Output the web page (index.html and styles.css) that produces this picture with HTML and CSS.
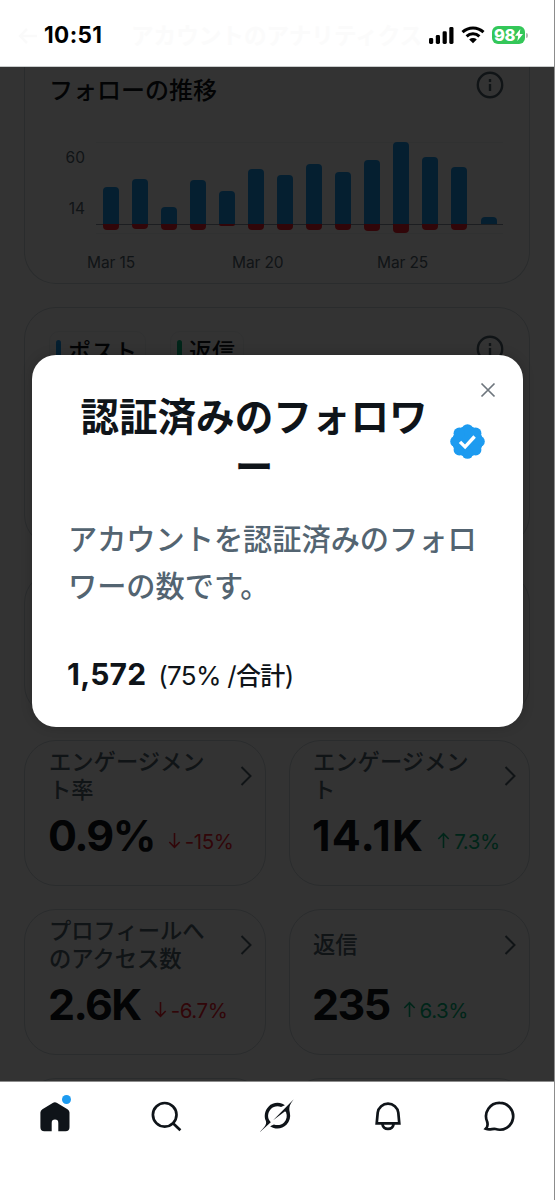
FILE: index.html
```html
<!DOCTYPE html>
<html lang="ja">
<head>
    <meta charset="UTF-8">
    <meta name="viewport" content="width=555, height=1200">
    <title>アカウントのアナリティクス</title>
    <link rel="stylesheet" href="styles.css">
</head>
<body>
    <div class="screen">
        <!-- Status bar over the faded page header -->
        <header class="status-bar">
            <div class="page-header">
                <svg width="20" height="18" viewBox="0 0 20 18"><path d="M19 9H2M9 2L2 9l7 7"/></svg>
                <span>アカウントのアナリティクス</span>
            </div>
            <span class="time">10:51</span>
            <div class="status-icons">
                <svg width="25" height="17" viewBox="0 0 25 17">
                    <rect x="0" y="11" width="4.2" height="6" rx="1.4"/>
                    <rect x="6.8" y="8" width="4.2" height="9" rx="1.4"/>
                    <rect x="13.6" y="4.3" width="4.2" height="12.7" rx="1.4"/>
                    <rect x="20.3" y="0" width="4.2" height="17" rx="1.4"/>
                </svg>
                <svg class="wifi" width="24" height="18" viewBox="0 0 24 18">
                    <path d="M1.5 6.2a15.2 15.2 0 0 1 21 0M5.6 10.3a9.3 9.3 0 0 1 12.8 0" fill="none" stroke="#000" stroke-width="3"/>
                    <path d="M8.2 13.4a5.6 5.6 0 0 1 7.6 0L12 17.2z"/>
                </svg>
                <div class="battery">
                    <span>98</span>
                    <svg width="8" height="12" viewBox="0 0 8 12"><path d="M5.3 0L0 6.7h3.2L2.4 12 8 5.1H4.7z" fill="#fff"/></svg>
                </div>
                <i class="battery-tip"></i>
            </div>
        </header>

        <main class="content">
            <!-- Follows over time -->
            <section class="card chart-card">
                <div class="card-head">
                    <h2>フォローの推移</h2>
                    <svg class="info" width="28" height="28" viewBox="0 0 28 28"><circle cx="14" cy="14" r="12.2"/><path d="M14 13v7M14 8v3"/></svg>
                </div>
                <div class="chart">
                    <div class="y-axis"><span>60</span><span>14</span></div>
                    <div class="plot">
                        <div class="bar"><i class="up" style="height:37px"></i><i class="down" style="height:6px"></i></div>
                        <div class="bar"><i class="up" style="height:45px"></i><i class="down" style="height:5px"></i></div>
                        <div class="bar"><i class="up" style="height:17px"></i><i class="down" style="height:6px"></i></div>
                        <div class="bar"><i class="up" style="height:44px"></i><i class="down" style="height:6px"></i></div>
                        <div class="bar"><i class="up" style="height:33px"></i><i class="down" style="height:2px"></i></div>
                        <div class="bar"><i class="up" style="height:55px"></i><i class="down" style="height:6px"></i></div>
                        <div class="bar"><i class="up" style="height:49px"></i><i class="down" style="height:6px"></i></div>
                        <div class="bar"><i class="up" style="height:60px"></i><i class="down" style="height:6px"></i></div>
                        <div class="bar"><i class="up" style="height:52px"></i><i class="down" style="height:6px"></i></div>
                        <div class="bar"><i class="up" style="height:64px"></i><i class="down" style="height:7px"></i></div>
                        <div class="bar"><i class="up" style="height:82px"></i><i class="down" style="height:9px"></i></div>
                        <div class="bar"><i class="up" style="height:67px"></i><i class="down" style="height:6px"></i></div>
                        <div class="bar"><i class="up" style="height:57px"></i><i class="down" style="height:6px"></i></div>
                        <div class="bar"><i class="up" style="height:7px"></i></div>
                    </div>
                </div>
                <div class="x-axis"><span>Mar 15</span><span>Mar 20</span><span>Mar 25</span></div>
            </section>

            <!-- Posts and replies -->
            <section class="card posts-card">
                <div class="card-head">
                    <div class="legend">
                        <span class="chip"><i class="blue"></i>ポスト</span>
                        <span class="chip"><i class="green"></i>返信</span>
                    </div>
                    <svg class="info" width="28" height="28" viewBox="0 0 28 28"><circle cx="14" cy="14" r="12.2"/><path d="M14 13v7M14 8v3"/></svg>
                </div>
            </section>

            <!-- Metric tiles -->
            <div class="metrics">
                <section class="card metric"></section>
                <section class="card metric"></section>
                <section class="card metric">
                    <div class="metric-head"><h3>エンゲージメント率</h3><svg width="12" height="20" viewBox="0 0 12 20"><path d="M1.5 1l9 9-9 9"/></svg></div>
                    <div class="metric-value"><b>0.9%</b><span class="delta loss"><svg width="13" height="17" viewBox="0 0 12 17"><path d="M6 1v14M.8 10L6 15.3 11.2 10"/></svg>-15%</span></div>
                </section>
                <section class="card metric">
                    <div class="metric-head"><h3>エンゲージメント</h3><svg width="12" height="20" viewBox="0 0 12 20"><path d="M1.5 1l9 9-9 9"/></svg></div>
                    <div class="metric-value"><b class="wide">14.1K</b><span class="delta gain"><svg width="13" height="17" viewBox="0 0 12 17"><path d="M6 16V2M.8 7L6 1.7 11.2 7"/></svg>7.3%</span></div>
                </section>
                <section class="card metric">
                    <div class="metric-head"><h3>プロフィールへのアクセス数</h3><svg width="12" height="20" viewBox="0 0 12 20"><path d="M1.5 1l9 9-9 9"/></svg></div>
                    <div class="metric-value"><b>2.6K</b><span class="delta loss"><svg width="13" height="17" viewBox="0 0 12 17"><path d="M6 1v14M.8 10L6 15.3 11.2 10"/></svg>-6.7%</span></div>
                </section>
                <section class="card metric">
                    <div class="metric-head"><h3>返信</h3><svg width="12" height="20" viewBox="0 0 12 20"><path d="M1.5 1l9 9-9 9"/></svg></div>
                    <div class="metric-value"><b>235</b><span class="delta gain"><svg width="13" height="17" viewBox="0 0 12 17"><path d="M6 16V2M.8 7L6 1.7 11.2 7"/></svg>6.3%</span></div>
                </section>
                <section class="card metric"></section>
                <section class="card metric"></section>
            </div>

            <!-- Dimmed backdrop with the dialog -->
            <div class="overlay">
                <div class="modal">
                    <button class="close" aria-label="閉じる"><svg width="16" height="16" viewBox="0 0 16 16"><path d="M1.5 1.5l13 13M14.5 1.5l-13 13"/></svg></button>
                    <div class="modal-title">
                        <h1>認証済みのフォロワー</h1>
                        <svg width="35" height="35" viewBox="0 0 35 35">
                            <g fill="#1d9bf0">
                                <circle cx="17.5" cy="17.5" r="15.3"/>
                                <circle cx="17.5" cy="5.9" r="5.7"/><circle cx="25.7" cy="9.3" r="5.7"/>
                                <circle cx="29.1" cy="17.5" r="5.7"/><circle cx="25.7" cy="25.7" r="5.7"/>
                                <circle cx="17.5" cy="29.1" r="5.7"/><circle cx="9.3" cy="25.7" r="5.7"/>
                                <circle cx="5.9" cy="17.5" r="5.7"/><circle cx="9.3" cy="9.3" r="5.7"/>
                            </g>
                            <path d="M10 17.9l5.1 5L24.6 12.5" fill="none" stroke="#fff" stroke-width="3.4"/>
                        </svg>
                    </div>
                    <p class="modal-text">アカウントを認証済みのフォロワーの数です。</p>
                    <div class="modal-count"><b>1,572</b><span>(75% /<em>合計</em>)</span></div>
                </div>
            </div>
        </main>

        <!-- Bottom navigation -->
        <nav class="tab-bar">
            <a class="tab home">
                <svg width="36" height="36" viewBox="0 0 36 36"><path d="M15.7 3.9a4.4 4.4 0 0 1 4.4 0l10.4 6.3a4 4 0 0 1 2 3.4v14.6a4 4 0 0 1-4 4h-7.2v-8.3a3.3 3.3 0 0 0-6.6 0v8.3H7.4a4 4 0 0 1-4-4V13.6a4 4 0 0 1 2-3.4z"/></svg>
                <i class="dot"></i>
            </a>
            <a class="tab"><svg class="line" width="36" height="36" viewBox="0 0 36 36"><circle cx="16.7" cy="15.8" r="11.8"/><path d="M25 24.2l7.4 7"/></svg></a>
            <a class="tab"><svg width="34" height="33" viewBox="0 0 33 32"><path d="M12.745 20.54l10.97-8.19c.539-.4 1.307-.244 1.564.38 1.349 3.288.746 7.241-1.938 9.955-2.683 2.714-6.417 3.31-9.83 1.954l-3.728 1.745c5.347 3.697 11.84 2.782 15.898-1.324 3.219-3.255 4.216-7.692 3.284-11.693l.008.009c-1.351-5.878.332-8.227 3.782-13.031L33 0l-4.54 4.59v-.014L12.743 20.544m-2.263 1.987c-3.837-3.707-3.175-9.446.1-12.755 2.42-2.449 6.388-3.448 9.852-1.979l3.72-1.737c-.67-.49-1.53-1.017-2.515-1.387-4.455-1.854-9.789-.931-13.41 2.728-3.483 3.523-4.579 8.94-2.697 13.561 1.405 3.454-.899 5.898-3.22 8.364C1.49 30.2.666 31.074 0 32l10.478-9.466"/></svg></a>
            <a class="tab"><svg class="line" width="36" height="36" viewBox="0 0 36 36"><path d="M6.7 24.4L7.7 13.6a10.4 10.4 0 0 1 20.6 0L29.3 24.4zM12.4 25.2a5.7 5.7 0 0 0 11.2 0"/></svg></a>
            <a class="tab"><svg class="line" width="36" height="36" viewBox="0 0 36 36"><path d="M18.8 3.9a13.4 13.4 0 1 1-4.3 26.1c-2.8-.8-5.6 1.6-9.7-.2 2.6-2.6 2-5 1.3-7.3A13.4 13.4 0 0 1 18.8 3.9z"/></svg></a>
        </nav>
    </div>
</body>
</html>
```

FILE: styles.css
```css
* {
    box-sizing: border-box;
}

body {
    margin: 0;
    font-family: Inter, "Noto Sans CJK JP", sans-serif;
    color: #0f1419;
    background: #fff;
}

h1, h2, h3, p {
    margin: 0;
    font-weight: 500;
}

svg {
    display: block;
    flex: none;
}

.screen {
    position: relative;
    width: 555px;
    height: 1200px;
    display: flex;
    flex-direction: column;
    overflow: hidden;
    border-right: 1px solid #8c8c8c;
}

/* Status bar */
.status-bar {
    position: relative;
    height: 67px;
    flex: none;
    display: flex;
    justify-content: space-between;
    align-items: center;
    padding: 4px 26px 0 44px;
    border-bottom: 1px solid #c9cccc;
}

/* Header showing faintly through the status bar */
.page-header {
    position: absolute;
    left: 18px;
    top: 18px;
    display: flex;
    align-items: center;
    gap: 93px;
    font-size: 22.6px;
    font-weight: 700;
    line-height: 36px;
    color: #fbfbfb;
}

.page-header svg {
    fill: none;
    stroke: #fafafa;
    stroke-width: 2.5;
}

.time {
    position: relative;
    font-size: 22.5px;
    font-weight: 700;
    line-height: 30px;
    letter-spacing: 0.4px;
    color: #000;
}

.status-icons {
    position: relative;
    display: flex;
    align-items: center;
}

.wifi {
    margin-left: 7px;
}

.battery {
    display: flex;
    justify-content: center;
    align-items: center;
    width: 33px;
    height: 18px;
    margin-left: 7px;
    border-radius: 6px;
    background: #34c759;
    color: #fff;
    font-size: 16.5px;
    font-weight: 800;
    letter-spacing: -0.5px;
}

.battery-tip {
    width: 2px;
    height: 5px;
    margin-left: 1px;
    border-radius: 0 2px 2px 0;
    background: #b5b5b5;
}

/* Analytics content */
.content {
    position: relative;
    height: 1014px;
    flex: none;
    padding: 0 24px;
    overflow: hidden;
}

.card {
    border: 1px solid #cfd9de;
    border-radius: 32px;
}

.card-head {
    display: flex;
    justify-content: space-between;
    align-items: flex-start;
}

.info {
    fill: none;
    stroke: #536471;
    stroke-width: 2.4;
}

.chart-card {
    height: 217px;
    padding: 4px 25px 0 24px;
    border-top: 0;
    border-radius: 0 0 32px 32px;
}

.chart-card h2 {
    padding-top: 2px;
    font-size: 24px;
    line-height: 36px;
}

.chart {
    display: flex;
    margin-top: 33px;
}

.y-axis {
    width: 47px;
    padding: 6px 11px 0 0;
    text-align: right;
    font-size: 15.5px;
    color: #536471;
}

.y-axis span {
    display: block;
    height: 51px;
    line-height: 20px;
}

.y-axis span:last-child {
    height: 20px;
}

.plot {
    display: flex;
    width: 407px;
    height: 92px;
    border-top: 1px solid #eff3f4;
    border-bottom: 1px solid #eff3f4;
    background: linear-gradient(#8b98a5, #8b98a5) 0 81px / 100% 1px no-repeat;
}

.bar {
    flex: 1;
    display: grid;
    grid-template-rows: 81px 9px;
    justify-content: center;
}

.up {
    width: 16px;
    align-self: end;
    border-radius: 4px 4px 0 0;
    background: #1d9bf0;
}

.down {
    width: 16px;
    border-radius: 0 0 4px 4px;
    background: #f4212e;
}

.x-axis {
    display: flex;
    gap: 96px;
    margin: 19px 0 0 38px;
    font-size: 15.5px;
    line-height: 20px;
    letter-spacing: -0.1px;
    color: #536471;
    white-space: nowrap;
}

/* keeps the labels five bars apart */
.x-axis span {
    width: 49px;
}

.posts-card {
    height: 240px;
    margin-top: 23px;
    padding: 23px 25px 0 24px;
}

.legend {
    display: flex;
    gap: 24px;
}

.chip {
    display: flex;
    align-items: center;
    gap: 7px;
    height: 38px;
    padding: 0 8px 0 6px;
    border: 1px solid #eff3f4;
    border-radius: 10px;
    font-size: 23px;
    font-weight: 500;
}

.chip i {
    width: 5px;
    height: 20px;
    border-radius: 3px;
}

.posts-card .info {
    margin-top: 4px;
}

.blue { background: #1d9bf0; }
.green { background: #00ba7c; }

.metrics {
    display: grid;
    grid-template-columns: 242px 241px;
    grid-auto-rows: 146px;
    gap: 23px;
    margin-top: 24px;
}

.metric {
    padding: 5px 13px 0 24px;
}

.metric:nth-child(even) {
    padding-left: 23px;
}

.metric-head {
    display: flex;
    justify-content: space-between;
    align-items: center;
    height: 59px;
}

.metric-head h3 {
    width: 162px;
    font-size: 22.3px;
    line-height: 28px;
    color: #536471;
}

.metric-head svg {
    fill: none;
    stroke: #536471;
    stroke-width: 2;
}

.metric-value {
    display: flex;
    align-items: baseline;
    gap: 13px;
    margin-left: -1px;
    line-height: 60px;
}

.metric-value b {
    font-size: 43px;
    font-weight: 700;
    letter-spacing: -1.6px;
    color: #0f1419;
}

/* values with narrow ones */
.metric-value .wide {
    letter-spacing: 1.2px;
}

.delta {
    display: flex;
    align-items: baseline;
    gap: 4px;
    font-size: 20.5px;
    letter-spacing: -0.4px;
    transform: translateY(-2px);
}

.delta svg {
    fill: none;
    stroke: currentColor;
    stroke-width: 1.6;
}

.loss { color: #f4212e; }
.gain { color: #00ba7c; }

/* Backdrop and dialog */
.overlay {
    position: absolute;
    inset: 0;
    padding: 288px 31px 0 32px;
    background: rgba(0, 0, 0, 0.8);
}

.modal {
    position: relative;
    height: 372px;
    padding: 37px 38px 0 36px;
    border-radius: 24px;
    background: #fff;
    box-shadow: 0 0 12px rgba(0, 0, 0, 0.2);
}

.close {
    position: absolute;
    top: 27px;
    right: 27px;
    padding: 0;
    border: 0;
    background: none;
}

.close svg {
    fill: none;
    stroke: #6e767d;
    stroke-width: 1.7;
}

.modal-title {
    display: flex;
    align-items: center;
    justify-content: space-between;
}

.modal-title h1 {
    width: 372px;
    font-size: 38.6px;
    font-weight: 700;
    line-height: 50px;
    text-align: center;
}

.modal-title svg {
    margin-bottom: 2px;
}

.modal-text {
    width: 414px;
    margin-top: 24px;
    font-size: 29.2px;
    font-weight: 500;
    line-height: 47px;
    color: #536471;
}

.modal-count {
    display: flex;
    align-items: baseline;
    gap: 12px;
    margin: 42px 0 0 -1px;
    line-height: 44px;
    font-size: 26px;
    letter-spacing: -0.7px;
}

.modal-count b {
    font-size: 30px;
    letter-spacing: 0.2px;
}

.modal-count em {
    font-size: 25px;
    font-style: normal;
    font-weight: 500;
}

/* Bottom navigation */
.tab-bar {
    display: flex;
    flex: 1;
    align-items: flex-start;
    padding-top: 17px;
    border-top: 1px solid #8c8c8c;
}

.tab {
    position: relative;
    flex: 1;
    display: flex;
    justify-content: center;
    fill: #0f1419;
}

.line {
    fill: none;
    stroke: #0f1419;
    stroke-width: 2.7;
}

.dot {
    position: absolute;
    top: -4px;
    left: 62px;
    width: 9px;
    height: 9px;
    border-radius: 50%;
    background: #1d9bf0;
}
```
